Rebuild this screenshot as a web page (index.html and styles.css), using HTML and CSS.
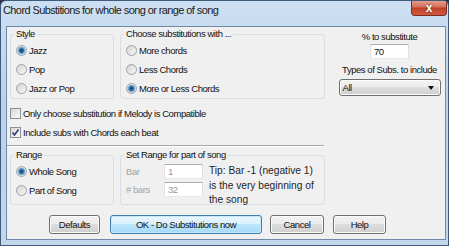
FILE: index.html
```html
<!DOCTYPE html>
<html lang="en">
  <head>
    <meta charset="UTF-8" />
    <title>Chord Substitions</title>
    <link rel="stylesheet" href="styles.css">
  </head>
  <body>
    <div class="window">
      <!-- Title bar -->
      <div class="titlebar">
        <span class="title">Chord Substitions for whole song or range of song</span>
        <button class="close-btn">x</button>
      </div>

      <div class="client">
        <div class="top-row">
          <fieldset class="group style-group">
            <legend>Style</legend>
            <label class="radio on"><span class="dot"></span>Jazz</label>
            <label class="radio"><span class="dot"></span>Pop</label>
            <label class="radio"><span class="dot"></span>Jazz or Pop</label>
          </fieldset>

          <fieldset class="group choose-group">
            <legend>Choose substitutions with ...</legend>
            <label class="radio"><span class="dot"></span>More chords</label>
            <label class="radio"><span class="dot"></span>Less Chords</label>
            <label class="radio on"><span class="dot"></span>More or Less Chords</label>
          </fieldset>

          <div class="percent-col">
            <div class="percent-label">% to substitute</div>
            <div class="textbox percent-box">70</div>
            <div class="types-label">Types of Subs. to include</div>
            <div class="combo">All<span class="arrow"></span></div>
          </div>
        </div>

        <label class="check">
          <span class="box"></span>Only choose substitution if Melody is Compatible
        </label>
        <label class="check">
          <span class="box">
            <svg width="9" height="9" viewBox="0 0 9 9"><path d="M1.5 4.5 L3.5 7 L7.5 1.5" fill="none" stroke="#2b3f86" stroke-width="1.6"/></svg>
          </span>Include subs with Chords each beat
        </label>

        <div class="separator"></div>

        <div class="range-row">
          <fieldset class="group style-group">
            <legend>Range</legend>
            <label class="radio on"><span class="dot"></span>Whole Song</label>
            <label class="radio"><span class="dot"></span>Part of Song</label>
          </fieldset>

          <fieldset class="group choose-group">
            <legend>Set Range for part of song</legend>
            <div class="range-body">
              <div class="range-fields">
                <div class="field-row">
                  <span class="dim-label">Bar</span>
                  <span class="textbox dim">1</span>
                </div>
                <div class="field-row">
                  <span class="dim-label"># bars</span>
                  <span class="textbox dim">32</span>
                </div>
              </div>
              <p class="tip">Tip: Bar -1 (negative 1)<br>is the very beginning of<br>the song</p>
            </div>
          </fieldset>
        </div>

        <!-- Dialog buttons -->
        <div class="buttons">
          <button class="btn btn-defaults">Defaults</button>
          <button class="btn btn-ok">OK - Do Substitutions now</button>
          <button class="btn btn-cancel">Cancel</button>
          <button class="btn btn-help">Help</button>
        </div>
      </div>
    </div>
  </body>
</html>
```

FILE: styles.css
```css
* {
  box-sizing: border-box;
}

body {
  margin: 0;
  background: #2a3644;
  font-family: "Liberation Sans", Arial, sans-serif;
  font-size: 9.5px;
  letter-spacing: -0.45px;
  color: #111;
}

/* Window frame */
.window {
  width: 449px;
  height: 246px;
  display: flex;
  flex-direction: column;
  border: 1px solid #3e5b7b;
  border-radius: 6px 6px 0 0;
  background: linear-gradient(#cddff2, #bcd2ea 40%, #c3d7ec);
  overflow: hidden;
}

.titlebar {
  height: 25px;
  display: flex;
  justify-content: space-between;
  align-items: flex-start;
}

.title {
  padding-left: 2px;
  font-size: 11px;
  letter-spacing: -0.6px;
  line-height: 19px;
  color: #1b1b1b;
}

.close-btn {
  width: 36px;
  height: 16px;
  margin: -1px 1px 0 0;
  padding: 0;
  border: 1px solid #7b2d22;
  border-top: none;
  border-radius: 0 0 4px 4px;
  background: linear-gradient(#e8a593, #d4705c 45%, #c0402a 55%, #cf5a3e);
  color: #fff;
  font-family: "Liberation Sans", sans-serif;
  font-weight: bold;
  font-size: 12px;
  line-height: 12px;
  letter-spacing: 0;
  text-shadow: 0 0 2px #5a1a10;
}

.client {
  flex: 1;
  margin: 0 2px 5px 5px;
  padding: 1px 0 0 3px;
  border: 1px solid #6f8aa8;
  background: #f0f0f0;
}

/* Group boxes */
.top-row,
.range-row {
  display: flex;
}

.group {
  margin: 0;
  padding: 1px 0 0 5px;
  border: 1px solid #d5dfe5;
  border-radius: 3px;
}

.group legend {
  margin-left: -2px;
  padding: 0 2px;
  line-height: 12px;
}

.style-group {
  width: 104px;
  height: 71px;
  margin-right: 6px;
}

.choose-group {
  width: 205px;
  height: 71px;
}

.radio {
  height: 19px;
  display: flex;
  align-items: center;
  gap: 2px;
}

.radio .dot {
  width: 11px;
  height: 11px;
  border-radius: 50%;
  border: 1px solid #a2a2a2;
  background: linear-gradient(135deg, #d4d4d4, #f8f8f8);
}

.radio.on .dot {
  background: radial-gradient(circle, #123e6c 0, #2a659c 1.8px, #74acd6 3.2px, #dfe7ee 4.3px);
}

/* Percent column */
.percent-col {
  width: 105px;
  margin-left: 12px;
  display: flex;
  flex-direction: column;
  align-items: center;
}

.percent-label {
  margin-top: 3px;
  line-height: 12px;
}

.textbox {
  display: block;
  height: 15px;
  border: 1px solid #abadb3;
  border-color: #abadb3 #dbdfe6 #e3e9ef #e2e3ea;
  background: #fff;
  padding-left: 3px;
  line-height: 13px;
}

.percent-box {
  width: 39px;
  margin-top: 1px;
}

.types-label {
  margin-top: 5px;
  line-height: 12px;
  white-space: nowrap;
}

.combo {
  position: relative;
  width: 102px;
  height: 17px;
  margin-top: 3px;
  padding-left: 3px;
  border: 1px solid #707070;
  border-radius: 3px;
  background: linear-gradient(#f2f2f2, #ebebeb 50%, #dddddd 50%, #cfcfcf);
  box-shadow: inset 0 0 0 1px #fcfcfc;
  line-height: 15px;
}

.combo .arrow {
  position: absolute;
  right: 6px;
  top: 6px;
  border-left: 3.5px solid transparent;
  border-right: 3.5px solid transparent;
  border-top: 4px solid #111;
}

/* Checkboxes */
.check {
  height: 19px;
  display: flex;
  align-items: center;
  gap: 2px;
}

.check:first-of-type {
  margin-top: 5px;
}

.check .box {
  width: 11px;
  height: 11px;
  border: 1px solid #8e8f8f;
  background: linear-gradient(135deg, #d8d8d8, #fbfbfb);
  display: flex;
  align-items: center;
  justify-content: center;
}

.separator {
  width: 317px;
  margin: 3px 0 2px -3px;
  border-top: 1px solid #a7a7a7;
  border-bottom: 1px solid #fff;
}

.range-row .group {
  height: 56px;
}

/* Set range fields */
.range-body {
  display: flex;
}

.field-row {
  height: 18px;
  display: flex;
  align-items: center;
}

.dim-label {
  width: 38px;
  color: #a3a3a3;
}

.textbox.dim {
  width: 39px;
  color: #9a9a9a;
}

.tip {
  margin: 2px 0 0 6px;
  font-size: 10.2px;
  letter-spacing: 0;
  line-height: 14.5px;
  color: #1e1e1e;
}

/* Buttons */
.buttons {
  display: flex;
  margin: 10px 0 0 39px;
}

.btn {
  height: 19px;
  padding: 0;
  border: 1px solid #707070;
  border-radius: 3px;
  background: linear-gradient(#f2f2f2, #ebebeb 50%, #dddddd 50%, #cfcfcf);
  box-shadow: inset 0 0 0 1px #fcfcfc;
  font-family: inherit;
  font-size: 9.5px;
  letter-spacing: -0.45px;
  color: #111;
}

.btn-defaults {
  width: 51px;
}

.btn-ok {
  width: 152px;
  margin-left: 10px;
  border-color: #3c7fb1;
  background: linear-gradient(#eaf6fd, #d9f0fc 50%, #bee6fd 50%, #a7d9f5);
  box-shadow: inset 0 0 0 1px #c6e9fc;
}

.btn-cancel {
  width: 54px;
  margin-left: 8px;
}

.btn-help {
  width: 53px;
  margin-left: 9px;
}
```
